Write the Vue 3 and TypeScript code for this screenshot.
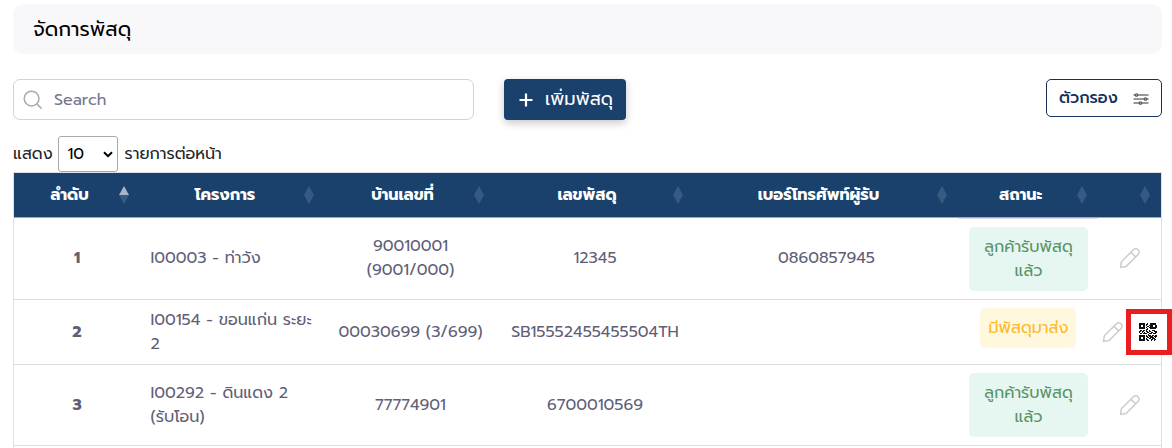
<script setup lang="ts">
interface Column {
  label: string
  width: number
  asc?: boolean
}
interface Parcel {
  id: number
  project: string[]
  house: string[]
  parcel: string
  phone: string
  status: string[]
  waiting?: boolean
}

const columns: Column[] = [
  { label: 'ลำดับ', width: 126, asc: true },
  { label: 'โครงการ', width: 185 },
  { label: 'บ้านเลขที่', width: 170 },
  { label: 'เลขพัสดุ', width: 199 },
  { label: 'เบอร์โทรศัพท์ผู้รับ', width: 264 },
  { label: 'สถานะ', width: 140 },
  { label: '', width: 63 },
]

const parcels: Parcel[] = [
  { id: 1, project: ['I00003 - ท่าวัง'], house: ['90010001', '(9001/000)'], parcel: '12345', phone: '0860857945', status: ['ลูกค้ารับพัสดุ', 'แล้ว'] },
  { id: 2, project: ['I00154 - ขอนแก่น ระยะ', '2'], house: ['00030699 (3/699)'], parcel: 'SB15552455455504TH', phone: '', status: ['มีพัสดุมาส่ง'], waiting: true },
  { id: 3, project: ['I00292 - ดินแดง 2', '(รับโอน)'], house: ['77774901'], parcel: '6700010569', phone: '', status: ['ลูกค้ารับพัสดุ', 'แล้ว'] },
]

const qrRows = [
  '111111001001111110',
  '111111011001111110',
  '110011010011110011',
  '110011001101110011',
  '111111010011111111',
  '111111001001111110',
  '000000011000000000',
  '011011010010011100',
  '110110011011000111',
  '100101001100110011',
  '011011110011101110',
  '000000000100000000',
  '111111010111011011',
  '111111011011110111',
  '110011001101111010',
  '110011010011011100',
  '111111011000110110',
  '111111001100100100',
]
const qrPath = qrRows
  .flatMap((row, y) => [...row].map((c, x) => (c === '1' ? `M${x} ${y}h1v1h-1z` : '')))
  .join('')
</script>

<template>
  <main class="page">
    <header class="title"><span>จัดการพัสดุ</span></header>

    <section class="tools">
      <div class="search">
        <svg width="20" height="20" viewBox="0 0 20 20"><circle cx="8.6" cy="8.6" r="7.4" /><path d="M14 14l4.6 4.6" /></svg>
        <span>Search</span>
      </div>
      <button class="add">
        <svg width="14" height="14" viewBox="0 0 14 14"><path d="M7 .5v13M.5 7h13" /></svg>
        <span>เพิ่มพัสดุ</span>
      </button>
      <button class="filter">
        <span>ตัวกรอง</span>
        <svg width="16" height="12" viewBox="0 0 16 12">
          <path d="M.5 2h15M.5 6h15M.5 10h15" />
          <circle cx="3.5" cy="2" r="1.3" /><circle cx="12.5" cy="6" r="1.3" /><circle cx="7.5" cy="10" r="1.3" />
        </svg>
      </button>
    </section>

    <section class="length">
      <span>แสดง</span>
      <div class="select">
        <span>10</span>
        <svg width="10" height="7" viewBox="0 0 10 7"><path d="M1 1.2l4 4 4-4" /></svg>
      </div>
      <span>รายการต่อหน้า</span>
    </section>

    <section class="table">
      <div class="row head">
        <div v-for="(c, i) in columns" :key="i" class="th" :style="{ width: c.width + 'px' }">
          <span>{{ c.label }}</span>
          <svg class="sort" width="10" height="18" viewBox="0 0 10 18">
            <path :class="{ on: c.asc }" d="M0 9L5 0l5 9z" /><path d="M0 9h10l-5 9z" />
          </svg>
        </div>
      </div>
      <div v-for="p in parcels" :key="p.id" class="row" :class="'r' + p.id">
        <div class="td c0"><b>{{ p.id }}</b></div>
        <div class="td c1"><span v-for="l in p.project" :key="l">{{ l }}</span></div>
        <div class="td c2"><span v-for="l in p.house" :key="l">{{ l }}</span></div>
        <div class="td c3"><span>{{ p.parcel }}</span></div>
        <div class="td c4"><span>{{ p.phone }}</span></div>
        <div class="td c5">
          <div class="badge" :class="{ waiting: p.waiting }">
            <span v-for="l in p.status" :key="l">{{ l }}</span>
          </div>
        </div>
        <div class="td c6">
          <svg class="pencil" width="22" height="22" viewBox="0 0 22 22">
            <path d="M1.6 20.4l.7-5.6L14.4 2.7q2.4-2.1 4.6.1t.1 4.7L7 19.6zM11.9 5.2l4.7 4.7" />
          </svg>
          <div v-if="p.waiting" class="qr">
            <svg width="18" height="18" viewBox="0 0 18 18">
              <path :d="qrPath" />
            </svg>
          </div>
        </div>
      </div>
      <div class="row rest"></div>
    </section>
  </main>
</template>

<style>
body {
  background: #fff;
  overflow: hidden;
}
</style>

<style scoped>
* {
  box-sizing: border-box;
}
.page {
  width: 1172px;
  height: 448px;
  overflow: hidden;
  padding: 4px 10px 0 13px;
  font-family: Prompt, Kanit, Lato, "Noto Sans Thai", "Noto Sans", sans-serif;
  font-size: 16px;
  line-height: 24px;
  color: #212529;
}
span {
  white-space: nowrap;
  display: block;
}
svg {
  display: block;
  flex: none;
  fill: none;
}
.title {
  height: 50px;
  border-radius: 10px;
  background: #f8f8fb;
  padding: 13px 20px;
  font-size: 20px;
  color: #000;
}
.tools {
  display: flex;
  align-items: flex-start;
  margin-top: 25px;
}
.search {
  width: 461px;
  height: 41px;
  border: 1px solid #ced4da;
  border-radius: 7px;
  display: flex;
  align-items: center;
  padding-left: 9px;
  gap: 11px;
  color: #74788d;
}
.search svg {
  stroke: #a9a9b2;
  stroke-width: 1.5;
}
button {
  font: inherit;
  margin: 0;
  display: flex;
  align-items: center;
}
.add {
  width: 122px;
  height: 41px;
  margin-left: 30px;
  border: 0;
  border-radius: 4px;
  background: #19416c;
  color: #fff;
  padding: 0 0 0 15px;
  gap: 12px;
  font-size: 18px;
  box-shadow: 0 3px 8px rgba(0, 0, 0, 0.22);
}
.add span {
  padding-bottom: 2px;
}
.add svg {
  stroke: #fff;
  stroke-width: 2.2;
}
.filter {
  width: 116px;
  height: 38px;
  margin-left: auto;
  border: 1px solid #15305a;
  border-radius: 5px;
  background: #fff;
  color: #12305a;
  font-weight: 500;
  padding: 0 12px;
  justify-content: space-between;
}
.filter svg {
  margin-top: 1px;
  stroke: #777;
  stroke-width: 1.7;
}
.filter circle {
  fill: #bbb;
  stroke: #555;
  stroke-width: 1.1;
}
.length {
  display: flex;
  align-items: center;
  height: 36px;
  margin-top: 16px;
}
.select {
  width: 60px;
  height: 36px;
  border: 1px solid #aaa;
  border-radius: 3px;
  margin: 0 7px 0 5px;
  padding: 0 4px 0 9px;
  display: flex;
  align-items: center;
  justify-content: space-between;
  color: #000;
}
.select svg {
  stroke: #000;
  stroke-width: 2;
}
.table {
  width: 1149px;
  border: 1px solid #dfe0e6;
  border-bottom: 0;
}
.row {
  display: flex;
  border-bottom: 1px solid #dcdde0;
  color: #5f6078;
}
.head {
  height: 45px;
  background: #19416c;
  color: #fff;
  font-weight: 700;
  border-bottom-color: #a9a6ab;
}
.th {
  display: flex;
  align-items: center;
  padding: 0 11px 0 11px;
  flex: none;
}
.th span {
  flex: 1;
  text-align: center;
}
.sort {
  margin-left: 5px;
}
.sort path {
  fill: #375a80;
}
.sort path.on {
  fill: #a6b6ca;
}
.r1 {
  height: 82px;
}
.r2 {
  height: 65px;
}
.r3 {
  height: 81px;
}
.rest {
  height: 30px;
}
.td {
  display: flex;
  flex-direction: column;
  justify-content: center;
  align-items: center;
  flex: none;
}
.r1 .td:not(.c5) {
  padding-bottom: 2px;
}
.c0 {
  width: 126px;
}
.c1 {
  width: 185px;
  align-items: flex-start;
  padding-left: 10.5px;
}
.c2 {
  width: 170px;
  padding-left: 1px;
}
.c3 {
  width: 199px;
  padding-left: 1px;
}
.c4 {
  width: 264px;
  padding-left: 1px;
}
.c5 {
  width: 140px;
}
.r1 .c5 {
  border-top: 1px solid #dfdfe3;
}
.c6 {
  width: 63px;
  flex-direction: row;
}
.pencil {
  stroke: #ccc;
  stroke-width: 1.5;
}
.badge {
  width: 119px;
  height: 64px;
  border-radius: 5px;
  background: #e6f7f1;
  color: #5a9367;
  display: flex;
  flex-direction: column;
  justify-content: center;
  align-items: center;
  padding-left: 1px;
}
.badge.waiting {
  width: 96px;
  height: 40px;
  background: #fff7de;
  color: #fdb92c;
  margin-bottom: 8px;
}
.r2 .c6 {
  justify-content: flex-start;
  padding-left: 4px;
}
.qr {
  width: 46px;
  height: 46px;
  border: 5px solid #e81e20;
  background: #fff;
  display: flex;
  align-items: center;
  padding-left: 8px;
  flex: none;
  margin-left: 2px;
  position: relative;
}
.qr path {
  fill: #111;
}
</style>
